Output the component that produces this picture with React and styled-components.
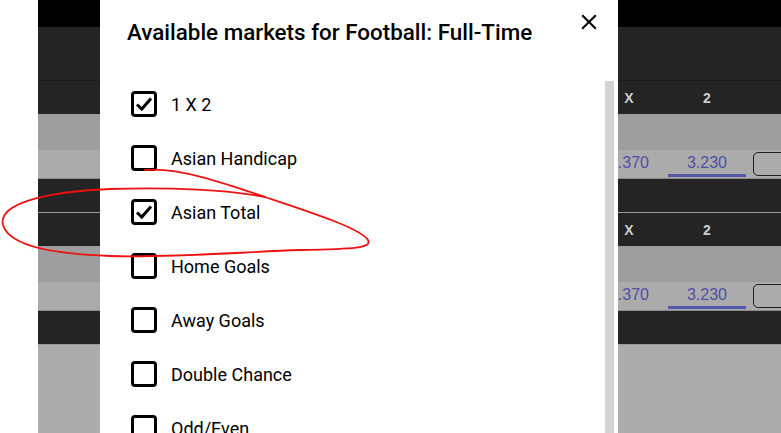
import React from "react";
import styled, { createGlobalStyle } from "styled-components";

const GlobalStyle = createGlobalStyle`
  html, body {
    margin: 0;
    padding: 0;
    background: #fff;
    overflow: hidden;
  }
  * { box-sizing: border-box; }
`;

const Page = styled.div`
  height: 433px;
  padding-left: 38px;
  overflow: hidden;
  font-family: "Liberation Sans", Arial, sans-serif;
`;

const Board = styled.div`
  width: 800px;
  height: 100%;
  display: flex;
  flex-direction: column;
  background: #acacac;
`;

const TopBar = styled.div`
  height: 27px;
  background: #000;
`;

const SectionHead = styled.div`
  height: ${(p) => p.h}px;
  background: #242424;
  border-bottom: 1px solid ${(p) => p.line};
  box-sizing: content-box;
`;

const Row = styled.div`
  display: flex;
  align-items: stretch;
  height: ${(p) => p.h}px;
  background: ${(p) => p.bg};
  ${(p) => p.line && `border-bottom: 1px solid ${p.line}; box-sizing: content-box;`}
`;

const Spacer = styled.div`
  flex: 1;
`;

const HeadCell = styled.div`
  width: 78px;
  display: flex;
  align-items: center;
  justify-content: center;
  color: #cfcfcf;
  font-weight: 700;
  font-size: 14px;
`;

const OddCell = styled.div`
  width: 78px;
  height: 27px;
  padding-top: 2px;
  display: flex;
  align-items: center;
  justify-content: center;
  color: #4f4fa6;
  font-size: 16px;
  border-bottom: 3px solid ${(p) => (p.selected ? "#5757aa" : "transparent")};
`;

const ButtonCell = styled.div`
  width: 92px;
  padding: 2px 12px 2px 7px;
  display: flex;
`;

const BetButton = styled.div`
  flex: 1;
  height: 24px;
  border: 1.5px solid #1e1e1e;
  border-radius: 5px;
`;

const Filler = styled.div`
  flex: 1;
  background: #acacac;
`;

const Modal = styled.div`
  position: fixed;
  top: 0;
  left: 100px;
  width: 518px;
  height: 433px;
  background: #fff;
  display: flex;
  flex-direction: column;
  font-family: Roboto, "Noto Sans", sans-serif;
  color: #000;
`;

const ModalHeader = styled.div`
  height: 81px;
  display: flex;
  justify-content: space-between;
  align-items: flex-start;
  padding: 16px 16px 0 27px;
`;

const Title = styled.h2`
  margin: 0;
  font-size: 22.4px;
  font-weight: 500;
  line-height: 32px;
`;

const CloseButton = styled.button`
  border: none;
  background: none;
  padding: 0;
  margin-top: -7px;
  width: 26px;
  height: 26px;
  display: flex;
  cursor: pointer;
`;

const ModalBody = styled.div`
  flex: 1;
  display: flex;
  min-height: 0;
`;

const List = styled.div`
  flex: 1;
  display: flex;
  flex-direction: column;
  gap: 28px;
  padding: 10px 0 0 31px;
  overflow: hidden;
`;

const Track = styled.div`
  width: 9px;
  margin-right: 4px;
  background: #d3d3d3;
`;

const Option = styled.label`
  display: flex;
  align-items: center;
  height: 26px;
  flex-shrink: 0;
  gap: 14px;
  font-size: 18px;
  cursor: pointer;
`;

const Box = styled.span`
  width: 26px;
  height: 26px;
  border: 3px solid #000;
  border-radius: 4px;
  display: flex;
  align-items: center;
  justify-content: center;
`;

const Annotation = styled.svg`
  position: fixed;
  inset: 0;
  pointer-events: none;
`;

const markets = [
  { name: "1 X 2", checked: true },
  { name: "Asian Handicap", checked: false },
  { name: "Asian Total", checked: true },
  { name: "Home Goals", checked: false },
  { name: "Away Goals", checked: false },
  { name: "Double Chance", checked: false },
  { name: "Odd/Even", checked: false },
];

const MarketBlock = ({ headH, headLine }) => (
  <>
    <SectionHead h={headH} line={headLine} />
    <Row h={33} bg="#242424">
      <Spacer />
      <HeadCell>X</HeadCell>
      <HeadCell>2</HeadCell>
      <ButtonCell />
    </Row>
    <Row h={36} bg="#9e9e9e" />
    <Row h={28} bg="#ababab" line="#8c8c8c">
      <Spacer />
      <OddCell>3.370</OddCell>
      <OddCell selected>3.230</OddCell>
      <ButtonCell>
        <BetButton />
      </ButtonCell>
    </Row>
  </>
);

export default function App() {
  return (
    <>
      <GlobalStyle />
      <Page>
        <Board>
          <TopBar />
          <MarketBlock headH={53} headLine="#1b1b1b" />
          <MarketBlock headH={33} headLine="#9a9a9a" />
          <SectionHead h={33} line="#9a9a9a" />
          <Filler />
        </Board>
      </Page>

      <Modal>
        <ModalHeader>
          <Title>Available markets for Football: Full-Time</Title>
          <CloseButton aria-label="close">
            <svg width="26" height="26" viewBox="0 0 24 24">
              <path
                fill="#000"
                d="M19 6.41 17.59 5 12 10.59 6.41 5 5 6.41 10.59 12 5 17.59 6.41 19 12 13.41 17.59 19 19 17.59 13.41 12z"
              />
            </svg>
          </CloseButton>
        </ModalHeader>
        <ModalBody>
          <List>
            {markets.map((m) => (
              <Option key={m.name}>
                <Box>
                  {m.checked && (
                    <svg width="18" height="18" viewBox="0 0 18 18">
                      <path d="M2 9.5 L6.8 14 L16 3.5" fill="none" stroke="#000" strokeWidth="3" />
                    </svg>
                  )}
                </Box>
                {m.name}
              </Option>
            ))}
          </List>
          <Track />
        </ModalBody>
      </Modal>

      <Annotation width="781" height="433" viewBox="0 0 781 433">
        <path
          d="M145,170 C180,167 230,185 265,197 C310,212 360,228 368,240 C372,248 355,249 300,250 C240,252 170,258 110,256 C60,254 10,248 3,225 C-2,205 40,192 110,189 C170,187 230,190 265,197"
          fill="none"
          stroke="#ee1111"
          strokeWidth="1.8"
          strokeLinecap="round"
        />
      </Annotation>
    </>
  );
}
